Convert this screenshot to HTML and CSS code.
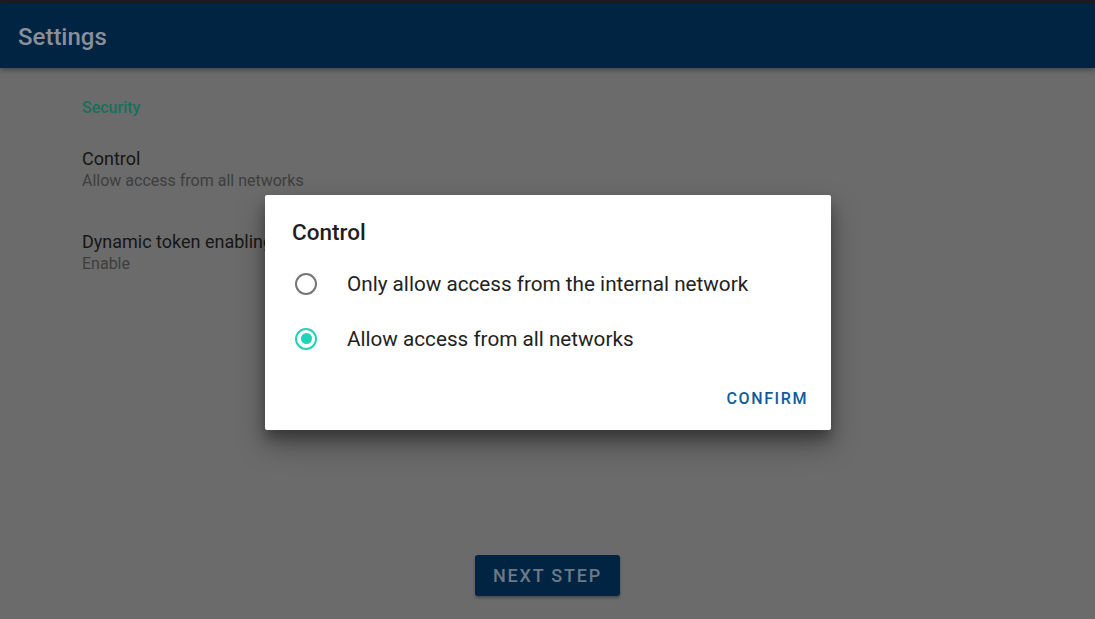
FILE: index.html
```html
<!DOCTYPE html>
<html lang="en">
<head>
  <meta charset="UTF-8">
  <meta name="viewport" content="width=device-width, initial-scale=1.0">
  <title>Settings</title>
  <link rel="stylesheet" href="styles.css">
</head>
<body>

<div class="status-strip"></div>
<header class="app-bar">
  <h1>Settings</h1>
</header>

<main class="content">
  <div class="section-title">Security</div>

  <div class="pref">
    <div class="pref-title">Control</div>
    <div class="pref-summary">Allow access from all networks</div>
  </div>

  <div class="pref">
    <div class="pref-title">Dynamic token enabling</div>
    <div class="pref-summary">Enable</div>
  </div>

  <div class="footer">
    <button class="next-btn">NEXT STEP</button>
  </div>
</main>

<!-- dialog over the dimmed page -->
<div class="dialog">
  <h2>Control</h2>
  <label class="option">
    <span class="radio"></span>
    Only allow access from the internal network
  </label>
  <label class="option">
    <span class="radio checked"></span>
    Allow access from all networks
  </label>
  <div class="actions">
    <button class="confirm">CONFIRM</button>
  </div>
</div>

</body>
</html>
```

FILE: styles.css
```css
* {
  box-sizing: border-box;
}
html, body {
  height: 100%;
}
body {
  margin: 0;
  font-family: Roboto, "Noto Sans", sans-serif;
  background-color: #6b6b6b;
  display: flex;
  flex-direction: column;
  overflow: hidden;
}
.status-strip {
  height: 3px;
  background-color: #1c1c1c;
}
.app-bar {
  height: 65px;
  background-color: #002442;
  display: flex;
  align-items: center;
  padding: 3px 0 0 18px;
  box-shadow: 0 2px 5px rgba(0, 0, 0, 0.35);
  position: relative;
}
.app-bar h1 {
  margin: 0;
  font-size: 24px;
  font-weight: 500;
  color: #8a9099;
}
.content {
  flex: 1;
  display: flex;
  flex-direction: column;
  padding: 29px 0 0 82px;
}
.section-title {
  color: #17705c;
  font-size: 16px;
  font-weight: 500;
  line-height: 22px;
  margin-bottom: 29px;
}
.pref {
  margin-bottom: 39px;
}
.pref-title {
  font-size: 18px;
  color: #161616;
  line-height: 22px;
}
.pref-summary {
  font-size: 16px;
  color: #3e3e3e;
  line-height: 22px;
}
.footer {
  margin-top: auto;
  display: flex;
  justify-content: center;
  padding: 0 82px 23px 0;
}
.next-btn {
  font-family: inherit;
  background-color: #002442;
  color: #6c7a88;
  border: none;
  border-radius: 3px;
  width: 145px;
  height: 41px;
  font-size: 18px;
  font-weight: 500;
  letter-spacing: 1.8px;
  box-shadow: 0 2px 3px rgba(0, 0, 0, 0.3);
}
.dialog {
  position: absolute;
  left: 265px;
  top: 195px;
  width: 566px;
  height: 235px;
  background-color: white;
  border-radius: 2px;
  box-shadow: 0 14px 28px rgba(0, 0, 0, 0.35), 0 8px 12px rgba(0, 0, 0, 0.25);
  padding: 23px 24px 0 27px;
}
.dialog h2 {
  margin: 0 0 18px 0;
  font-size: 22.5px;
  font-weight: 500;
  color: #1f1f1f;
  line-height: 28px;
}
.option {
  display: flex;
  align-items: center;
  height: 55px;
  font-size: 20.7px;
  color: #222;
  margin-top: -8px;
  margin-bottom: 8px;
}
.radio {
  width: 22px;
  height: 22px;
  border: 2px solid #767676;
  border-radius: 50%;
  margin: 0 30px 0 3px;
  display: flex;
  align-items: center;
  justify-content: center;
}
.radio.checked {
  border-color: #1dd4bb;
}
.radio.checked::after {
  content: "";
  width: 11px;
  height: 11px;
  border-radius: 50%;
  background-color: #1dd4bb;
}
.actions {
  display: flex;
  justify-content: flex-end;
  margin-top: 19px;
}
.confirm {
  font-family: inherit;
  background: none;
  border: none;
  color: #0e5c9c;
  font-size: 16px;
  font-weight: 500;
  letter-spacing: 1.6px;
  padding: 4px 0;
  margin-right: -1px;
}
```
